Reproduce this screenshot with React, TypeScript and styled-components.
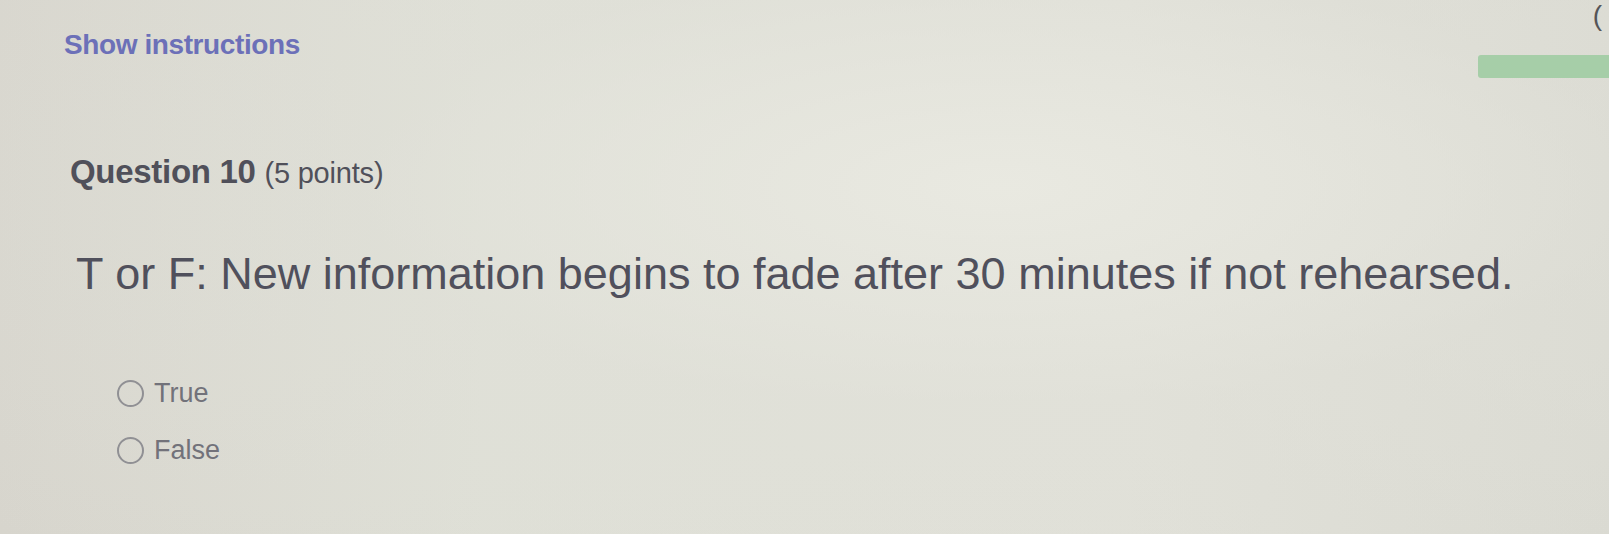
import styled, { createGlobalStyle } from "styled-components"

const Global = createGlobalStyle`
    html, body {
        margin: 0;
        padding: 0;
    }
    body {
        font-family: "Liberation Sans", Arial, sans-serif;
    }
`

const Page = styled.div`
    width: 1609px;
    height: 534px;
    overflow: hidden;
    background:
        radial-gradient(ellipse at 62% 35%, rgba(234, 234, 226, 0.9) 0%, rgba(226, 226, 218, 0.4) 45%, rgba(214, 212, 204, 0) 100%),
        linear-gradient(90deg, #d7d5cd 0%, #dedfd6 30%, #e0e0d8 70%, #d9d9d1 100%);
    display: flex;
    flex-direction: column;
`

const TopBar = styled.div`
    display: flex;
    justify-content: space-between;
    align-items: flex-start;
`

const InstructionsLink = styled.a`
    margin: 29px 0 0 64px;
    font-size: 28px;
    line-height: 32px;
    font-weight: bold;
    letter-spacing: -0.4px;
    color: #6c70b8;
    text-decoration: none;
`

const RightTools = styled.div`
    display: flex;
    flex-direction: column;
    align-items: flex-end;
    gap: 23px;
`

const Paren = styled.span`
    font-size: 28px;
    line-height: 32px;
    color: #555558;
    margin-right: 7px;
`

const ProgressBar = styled.div`
    width: 131px;
    height: 23px;
    background: #a6cea8;
    border-radius: 3px 0 0 3px;
`

const Question = styled.section`
    margin-top: 75px;
    padding-left: 70px;
    display: flex;
    flex-direction: column;
`

const QuestionHeader = styled.h2`
    margin: 0;
    font-size: 33px;
    line-height: 38px;
    font-weight: bold;
    color: #50505a;
    letter-spacing: -0.3px;
`

const Points = styled.span`
    font-size: 29px;
    font-weight: normal;
    letter-spacing: -0.2px;
`

const Prompt = styled.p`
    margin: 56px 0 0 6px;
    font-size: 45px;
    line-height: 52px;
    color: #50505c;
`

const Options = styled.div`
    margin: 78px 0 0 47px;
    display: flex;
    flex-direction: column;
    gap: 27px;
`

const Option = styled.label`
    display: flex;
    align-items: center;
    gap: 10px;
    font-size: 27px;
    line-height: 30px;
    color: #72727a;
`

const Radio = styled.span`
    width: 27px;
    height: 27px;
    border: 2px solid #909094;
    border-radius: 50%;
    box-sizing: border-box;
    display: inline-block;
    flex: none;
`

export default function App() {
    return (
        <>
            <Global />
            <Page>
                <TopBar>
                    <InstructionsLink>Show instructions</InstructionsLink>
                    <RightTools>
                        <Paren>(</Paren>
                        <ProgressBar />
                    </RightTools>
                </TopBar>
                <Question>
                    <QuestionHeader>
                        Question 10 <Points>(5 points)</Points>
                    </QuestionHeader>
                    <Prompt>T or F: New information begins to fade after 30 minutes if not rehearsed.</Prompt>
                    <Options>
                        <Option>
                            <Radio />
                            True
                        </Option>
                        <Option>
                            <Radio />
                            False
                        </Option>
                    </Options>
                </Question>
            </Page>
        </>
    )
}
